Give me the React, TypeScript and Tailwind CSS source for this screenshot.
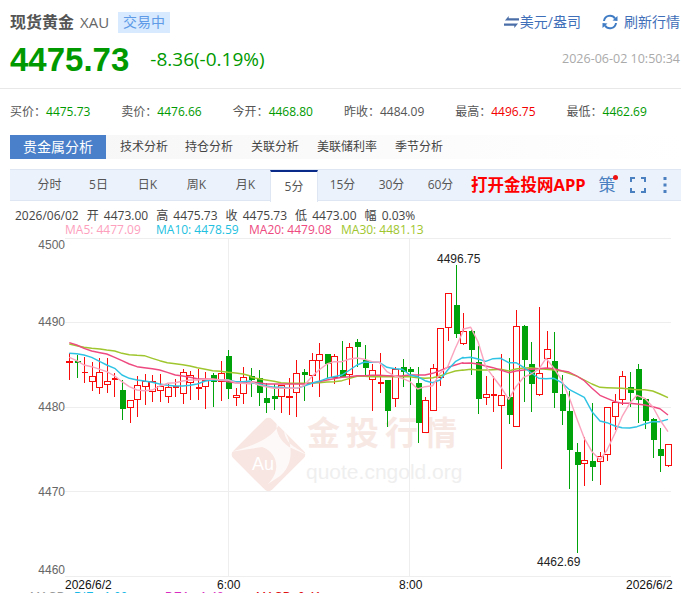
const CJK = '"Open Sans","Noto Sans CJK SC",sans-serif';

type C = [number, number, number, number, 'r' | 'g'];
const candles: C[] = [
  [353,361,363,380,'r'],[355,361,362,378,'g'],[357,371.5,372.5,383,'r'],[362,376,382,391,'r'],[358,372,388,394,'r'],
  [358,381,385,393,'r'],[373,378,379,397,'r'],[380,390,409,420,'g'],[400,400,408,423,'r'],[376,385,400,417,'r'],
  [374,381,387,405,'r'],[375,381,392,402,'r'],[374,386,391,402,'r'],[384,387,397,403,'r'],[379,386,386.5,397,'r'],
  [369,372,394,404,'r'],[371,375,383,400,'r'],[369,387,388,400,'r'],[372,380,387,409,'r'],[373,375,382,407,'g'],
  [361,373,382,401,'r'],[350,356,389,399,'g'],[388,395,398,406,'r'],[367,377,394,404,'r'],[368,376,380,397,'g'],
  [370,378,393,406,'g'],[383,398,403,413,'g'],[384,396,399,410,'g'],[385,385,397,413,'r'],[378,396,398,415,'r'],
  [360,373,393,417,'r'],[369,372,375,401,'g'],[353,360,376,387,'r'],[343,354,361,397,'r'],[354,354,364,378,'g'],
  [354,356,378,384,'r'],[341,370,377,377,'g'],[343,347,375,385,'r'],[339,342,347,367,'g'],[345,360,368,377,'g'],
  [364,370,380,411,'r'],[353,382,383,393,'r'],[380,380,411,427,'g'],[367,369,399,407,'r'],[359,367,372,387,'g'],
  [367,369,372,405,'g'],[367,383,423,443,'g'],[397,400,433,433,'r'],[364,368,411,411,'r'],[328,328,378,386,'r'],
  [293,293,328,341,'r'],[265,305,334,338,'g'],[313,331,344,345,'r'],[330,331,350,375,'g'],[346,362,399,414,'g'],
  [376,394,398,405,'r'],[376,394,395,412,'r'],[354,395,406,469,'r'],[358,397,415,424,'g'],[310,326,427,427,'r'],
  [325,326,360,402,'g'],[342,364,384,412,'g'],[307,373,395,396,'r'],[331,349,359,368,'r'],[332,361,393,408,'g'],
  [375,394,411,425,'g'],[391,411,450,489,'g'],[443,452,465,553,'g'],[437,460,464,486,'r'],[403,461,467,481,'g'],
  [452,456,462,485,'r'],[407,407,455,461,'r'],[394,402,417,430,'r'],[371,376,400,405,'r'],[372,387,393,407,'g'],
  [364,369,400,423,'g'],[398,399,421,429,'g'],[418,419,440,458,'g'],[428,449,456,472,'g'],[444,444,466,467,'r'],
];

type P = [number, number];
const z = (pts: P[], ox: number, oy: number) => pts.map(([x, y]) => `${(ox + x / 3).toFixed(1)},${(oy + y / 3).toFixed(1)}`).join(' ');
const line = (a: P[], b: P[], c: P[]) => [z(a, 40, 300), z(b, 250, 240), z(c, 460, 290)].join(' ');

const ma5 = line(
  [[88,172],[110,182],[132,195],[155,200],[180,208],[200,215],[224,228],[246,245],[268,260],[291,270],[313,272],[337,270],[359,258],[382,250],[406,248],[428,243],[450,240],[472,240],[496,238],[518,237],[541,240],[564,240],[587,248],[609,250],[632,252]],
  [[3,425],[26,435],[48,440],[72,445],[93,445],[116,445],[140,445],[162,437],[185,410],[207,390],[231,372],[252,365],[276,365],[299,357],[321,354],[344,358],[366,365],[388,367],[411,395],[434,408],[457,415],[480,425],[503,447],[525,440],[548,437],[570,400],[593,380],[616,325],[639,275]],
  [[8,118],[32,112],[54,155],[77,230],[99,260],[122,290],[146,328],[168,290],[191,262],[213,252],[236,238],[258,205],[282,235],[305,270],[327,320],[350,385],[373,445],[396,485],[420,510],[441,480],[465,430],[486,380],[509,340],[531,316],[554,325],[578,350],[600,390],[624,425]],
);
const ma10 = line(
  [[88,160],[110,161],[132,165],[155,172],[180,185],[200,195],[224,205],[246,225],[268,235],[291,240],[313,243],[337,247],[359,252],[382,256],[406,258],[428,258],[450,256],[472,252],[496,243],[518,240],[541,240],[564,240],[587,245],[609,245],[632,243]],
  [[3,428],[26,432],[48,438],[72,442],[93,442],[116,444],[140,445],[162,438],[185,430],[207,424],[231,415],[252,410],[276,405],[299,390],[321,375],[344,366],[366,367],[388,367],[411,382],[434,386],[457,388],[480,405],[503,410],[525,422],[548,428],[570,420],[593,390],[616,365],[639,352]],
  [[8,204],[32,202],[54,207],[77,214],[99,206],[122,205],[146,218],[168,218],[191,232],[213,248],[236,265],[258,266],[282,265],[305,278],[327,298],[350,310],[373,322],[396,365],[420,393],[441,398],[465,408],[486,413],[509,414],[531,410],[554,402],[578,395],[600,395],[624,388]],
);
const ma20 = line(
  [[88,128],[110,135],[132,145],[155,153],[180,158],[200,162],[224,172],[246,182],[268,192],[291,200],[313,203],[337,206],[359,210],[382,217],[406,225],[428,228],[450,232],[472,236],[496,237],[518,238],[541,240],[564,245],[587,248],[609,248],[632,250]],
  [[3,425],[26,428],[48,432],[72,432],[93,432],[116,432],[140,432],[162,432],[185,430],[207,425],[231,420],[252,416],[276,412],[299,410],[321,407],[344,407],[366,406],[388,406],[411,407],[434,408],[457,407],[480,405],[503,405],[525,405],[548,400],[570,392],[593,382],[616,375],[639,368]],
  [[8,220],[32,219],[54,222],[77,228],[99,233],[122,240],[146,248],[168,243],[191,240],[213,238],[236,236],[258,234],[282,236],[305,242],[327,246],[350,258],[373,272],[396,295],[420,316],[441,325],[465,335],[486,340],[509,340],[531,342],[554,345],[578,350],[600,356],[624,375]],
);
const ma30 = line(
  [[88,132],[110,137],[132,142],[155,145],[180,147],[200,150],[224,153],[246,160],[268,164],[291,166],[313,167],[337,175],[359,182],[382,188],[406,191],[428,194],[450,198],[472,203],[496,208],[518,212],[541,214],[564,217],[587,219],[609,222],[632,228]],
  [[3,412],[26,416],[48,420],[72,424],[93,428],[116,430],[140,430],[162,430],[185,429],[207,428],[231,426],[252,425],[276,422],[299,415],[321,409],[344,409],[366,410],[388,410],[411,410],[434,410],[457,410],[480,410],[503,413],[525,415],[548,413],[570,408],[593,400],[616,393],[639,390]],
  [[8,241],[32,238],[54,240],[77,240],[99,239],[122,238],[146,243],[168,237],[191,234],[213,233],[236,236],[258,238],[282,240],[305,243],[327,250],[350,258],[373,270],[396,282],[420,292],[441,293],[465,294],[486,295],[509,297],[531,299],[554,299],[578,303],[600,312],[624,323]],
);

const RED = '#f80c0c';
const GREEN = '#00a40a';

function Chart() {
  return (
    <svg viewBox="0 236 681 357" className="block w-[681px] h-[357px]" style={{ fontFamily: '"Liberation Sans",sans-serif' }}>
      {[238.5, 322.5, 407.5, 491.5, 576.5].map((y) => (
        <line key={y} x1="65" x2="671" y1={y} y2={y} stroke="#eeeeee" strokeWidth="1" />
      ))}
      <line x1="228.5" x2="228.5" y1="238" y2="576" stroke="#eeeeee" />
      <line x1="409.5" x2="409.5" y1="238" y2="576" stroke="#eeeeee" />
      <g>
        <rect x="241" y="427" width="55" height="55" rx="5" transform="rotate(45 268.5 454.5)" fill="#f8e6e2" />
        <path d="M230 452 C248 447 268 441 277 428 C283 420 281 416 279 416 C274 425 276 438 289 447 L307 455 C296 447 286 445 284 431 C290 437 297 462 280 476 L268 484 C282 470 277 452 262 447 Z" fill="#ffffff" opacity="0.75" />
        <text x="263" y="470" textAnchor="middle" fontSize="18" fill="#ffffff">Au</text>
        <text x="307" y="445" fontSize="33" fontWeight="700" fill="#f8e8e4" letterSpacing="6" style={{ fontFamily: CJK }}>金投行情</text>
        <text x="306" y="479" fontSize="21" fill="#efefef">quote.cngold.org</text>
      </g>
      {candles.map(([wt, bt, bb, wb, k], i) => {
        const x = Math.round(69 + i * 7.58);
        const col = k === 'r' ? RED : GREEN;
        const thin = bb - bt < 2;
        return (
          <g key={i}>
            <line x1={x + 0.5} x2={x + 0.5} y1={wt} y2={wb} stroke={col} strokeWidth="1" />
            {k === 'g' || thin ? (
              <rect x={x - 2.5} y={bt} width="6" height={Math.max(bb - bt, 1.5)} fill={col} shapeRendering="crispEdges" />
            ) : (
              <rect x={x - 2.5} y={bt + 0.5} width="6" height={bb - bt - 1} fill="#ffffff" stroke={col} strokeWidth="1" />
            )}
          </g>
        );
      })}
      <polyline points={ma30} fill="none" stroke="#9fc62e" strokeWidth="1.4" strokeLinejoin="round" />
      <polyline points={ma20} fill="none" stroke="#ee4a80" strokeWidth="1.4" strokeLinejoin="round" />
      <polyline points={ma10} fill="none" stroke="#2ec3e4" strokeWidth="1.4" strokeLinejoin="round" />
      <polyline points={ma5} fill="none" stroke="#fba4be" strokeWidth="1.4" strokeLinejoin="round" />
      <g fontSize="12" fill="#666666" textAnchor="end">
        <text x="65" y="249">4500</text>
        <text x="65" y="326">4490</text>
        <text x="65" y="411">4480</text>
        <text x="65" y="496">4470</text>
        <text x="65" y="574">4460</text>
      </g>
      <text x="437" y="263" fontSize="12" fill="#222222">4496.75</text>
      <text x="537" y="566" fontSize="12" fill="#222222">4462.69</text>
      <g fontSize="12" fill="#111111">
        <text x="65" y="589">2026/6/2</text>
        <text x="217" y="589">6:00</text>
        <text x="399" y="589">8:00</text>
        <text x="626" y="589">2026/6/2</text>
      </g>
      <g fontSize="12">
        <text x="30" y="601" fill="#999999">MACD</text>
        <text x="74" y="601" fill="#17b8e6">DIF: -1.00</text>
        <text x="165" y="601" fill="#d92bc0">DEA: -1.48</text>
        <text x="256" y="601" fill="#e01010">MACD: 0.41</text>
      </g>
    </svg>
  );
}

function Stat({ label, value, color }: { label: string; value: string; color: string }) {
  return (
    <div className="w-[111.3px] shrink-0 text-xs text-[#555555] whitespace-nowrap">
      {label}：<span className={color}>{value}</span>
    </div>
  );
}

export default function App() {
  const periods = ['分时', '5日', '日K', '周K', '月K'];
  const periods2 = ['15分', '30分', '60分'];
  const ohlc = ['2026/06/02', '开 4473.00', '高 4475.73', '收 4475.73', '低 4473.00', '幅 0.03%'];
  return (
    <div className="w-[681px] h-[593px] overflow-hidden bg-white" style={{ fontFamily: CJK }}>
      <div className="flex items-center h-[44px] pl-[10px] pr-[1px]">
        <span className="text-base font-bold text-[#555555]">现货黄金</span>
        <span className="ml-[6px] text-[15px] text-[#666666]">XAU</span>
        <span className="ml-[9px] w-[52px] h-[21px] flex items-center justify-center bg-[#d7eaff] text-sm text-[#5f9be6]">交易中</span>
        <div className="ml-auto flex items-center text-[#3f6fb8] text-sm">
          <svg width="15" height="16" viewBox="0 0 16 16" fill="#4a6fa8">
            <path d="M5 1.5 L5 4 L16 4 L16 6.5 L1 6.5 Z" />
            <path d="M11 14.5 L11 12 L0 12 L0 9.5 L15 9.5 Z" />
          </svg>
          <span className="ml-px">美元/盎司</span>
          <svg className="ml-[21px] mr-[6px]" width="16" height="16" viewBox="0 0 16 16" fill="none" stroke="#3f7cc4" strokeWidth="2">
            <path d="M2 7 A6 6 0 0 1 13 4.5" />
            <path d="M14 9 A6 6 0 0 1 3 11.5" />
            <path d="M15.5 2 L15.5 7 L10.5 6.5 Z" fill="#3f7cc4" stroke="none" />
            <path d="M0.5 14 L0.5 9 L5.5 9.5 Z" fill="#3f7cc4" stroke="none" />
          </svg>
          <span>刷新行情</span>
        </div>
      </div>
      <div className="flex items-center h-[45px] pb-[13px] pl-[10px] pr-[1px] border-b border-[#e8e8e8]">
        <span className="text-[33px] leading-none font-bold text-[#009900]" style={{ fontFamily: '"Liberation Sans",sans-serif' }}>4475.73</span>
        <span className="ml-[21px] text-[19px] text-[#009900]">-8.36(-0.19%)</span>
        <span className="ml-auto text-[12.5px] text-[#aaaaaa]">2026-06-02 10:50:34</span>
      </div>
      <div className="flex items-center h-[46px] pl-[10px]">
        <Stat label="买价" value="4475.73" color="text-[#009900]" />
        <Stat label="卖价" value="4476.66" color="text-[#009900]" />
        <Stat label="今开" value="4468.80" color="text-[#009900]" />
        <Stat label="昨收" value="4484.09" color="text-[#555555]" />
        <Stat label="最高" value="4496.75" color="text-[#f20000]" />
        <Stat label="最低" value="4462.69" color="text-[#009900]" />
      </div>
      <div className="flex items-center h-[24px] ml-[10px] bg-gradient-to-r from-[#f6f6f6] to-white text-xs text-[#444444]">
        <div className="w-[96px] h-full flex items-center justify-center bg-[#4a7fc9] text-white text-sm">贵金属分析</div>
        <span className="ml-[14px] w-[65px]">技术分析</span>
        <span className="w-[66px]">持仓分析</span>
        <span className="w-[66px]">关联分析</span>
        <span className="w-[78px]">美联储利率</span>
        <span>季节分析</span>
      </div>
      <div className="flex items-center h-[32px] mt-[10px] ml-[10px] bg-[#ebf2fc] border-y border-[#dde6f2] text-xs text-[#555555]">
        <div className="flex w-[260px] pl-[15px]">
          {periods.map((p) => (
            <span key={p} className="w-[49px] shrink-0 text-center">{p}</span>
          ))}
        </div>
        <span className="w-[48px] h-[32px] -mb-px flex items-center justify-center bg-white border-t-2 border-t-[#0a2a8a] border-r border-[#dde6f2] border-l">5分</span>
        {periods2.map((p) => (
          <span key={p} className="w-[49px] text-center">{p}</span>
        ))}
        <span className="ml-[6px] text-[16.5px] font-bold text-[#ff0000] whitespace-nowrap">打开金投网APP</span>
        <span className="relative ml-[13px] text-[17px] text-[#4a7fc0]">
          策
          <span className="absolute top-[1px] right-[-2px] w-[5px] h-[5px] rounded-full bg-[#ee1111]" />
        </span>
        <svg className="ml-[14px]" width="16" height="16" viewBox="0 0 16 16" fill="none" stroke="#4a7fc0" strokeWidth="2">
          <path d="M1 5 V1 H5 M11 1 H15 V5 M15 11 V15 H11 M5 15 H1 V11" />
        </svg>
        <svg className="ml-[17px]" width="4" height="16" viewBox="0 0 4 16" fill="#4a7fc0">
          <rect x="0.5" y="0" width="3" height="3" />
          <rect x="0.5" y="6.5" width="3" height="3" />
          <rect x="0.5" y="13" width="3" height="3" />
        </svg>
      </div>
      <div className="flex items-center gap-[8px] h-[17px] mt-[6px] pl-[15px] text-xs text-[#444444] whitespace-pre [word-spacing:2px]">
        {ohlc.map((t) => (
          <span key={t}>{t}</span>
        ))}
      </div>
      <div className="flex items-center h-[12px] pl-[65px] text-xs whitespace-nowrap">
        <span className="w-[91px] text-[#fda0bd]">MA5: 4477.09</span>
        <span className="w-[93px] text-[#22bfdf]">MA10: 4478.59</span>
        <span className="w-[92px] text-[#ee4a80]">MA20: 4479.08</span>
        <span className="text-[#9fc62e]">MA30: 4481.13</span>
      </div>
      <Chart />
    </div>
  );
}
